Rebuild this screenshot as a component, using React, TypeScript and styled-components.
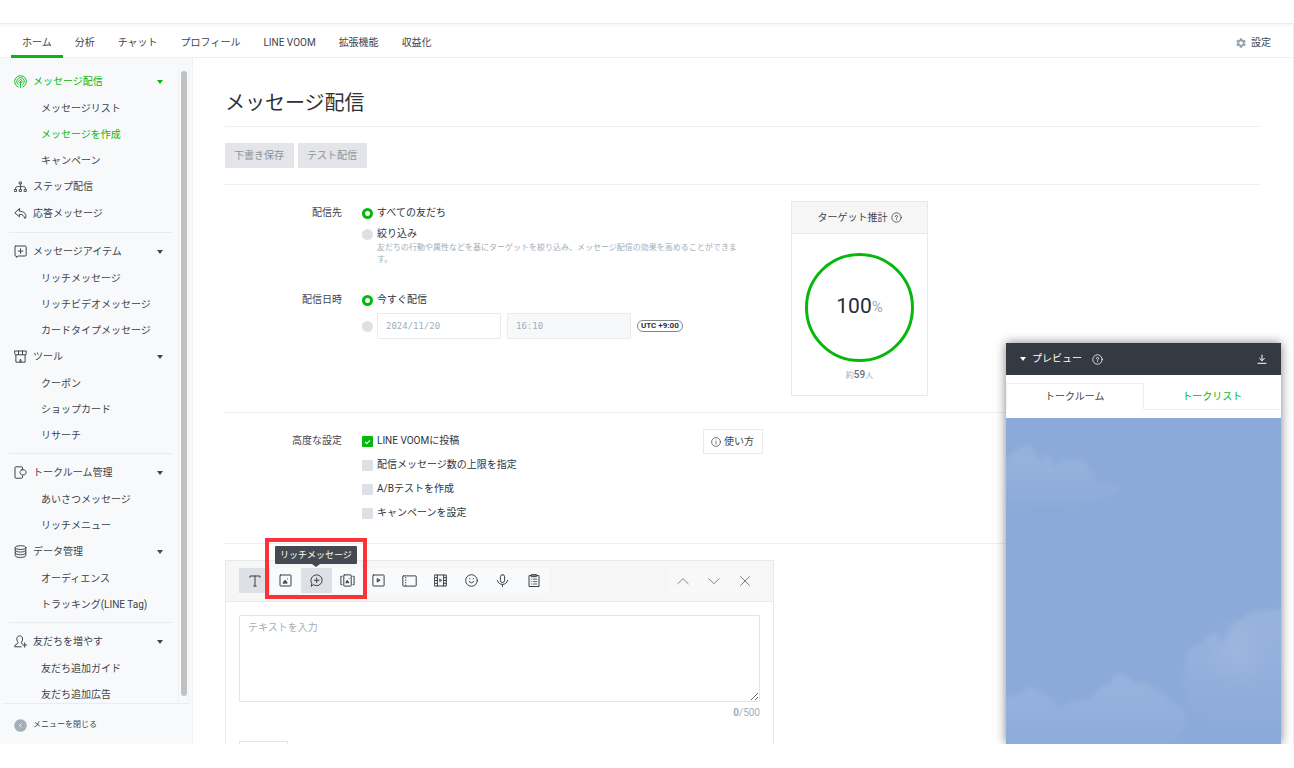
import React from "react";
import styled, { createGlobalStyle, css } from "styled-components";
import { MdSettings } from "react-icons/md";

const GREEN = "#06b80c";
const INK = "#3f444d";
const MUTED = "#a4adb8";
const LINE = "#eeeff1";

const GlobalStyle = createGlobalStyle`
  *, *::before, *::after { box-sizing: border-box; }
  body {
    margin: 0;
    background: #fff;
    color: ${INK};
    font: 10px/16px Roboto, "Noto Sans CJK JP", sans-serif;
  }
  button, input, textarea { font: inherit; color: inherit; margin: 0; }
  button { border: 0; padding: 0; background: none; cursor: pointer; }
  a { color: inherit; text-decoration: none; }
  ul { list-style: none; margin: 0; padding: 0; }
`;

/* ---------- frame ---------- */

const Page = styled.div`
  height: 100vh;
  padding: 23px 0 24px;
`;

const Frame = styled.div`
  position: relative;
  display: flex;
  flex-direction: column;
  height: 100%;
  overflow: hidden;
  border-top: 1px solid #ededee;
  border-right: 1px solid ${LINE};
`;

const TopBar = styled.header`
  flex: none;
  display: flex;
  justify-content: space-between;
  height: 34px;
  padding: 0 22px 0 11px;
  background: #fff;
  box-shadow: inset 0 -1px ${LINE}, inset 0 3px 2px -1px #f7f7f8;
`;

const Tabs = styled.nav`
  display: flex;
  gap: 1px;
`;

const Tab = styled.a<{ $active?: boolean }>`
  display: flex;
  align-items: center;
  padding: 6px 11px 0;
  border-bottom: 3px solid ${(p) => (p.$active ? GREEN : "transparent")};
`;

const Settings = styled.a`
  display: flex;
  align-items: center;
  gap: 4px;
  padding-top: 3px;
  svg { color: #97a2ae; }
`;

const Body = styled.div`
  flex: 1;
  min-height: 0;
  display: flex;
`;

/* ---------- side menu ---------- */

const Sidebar = styled.aside`
  flex: none;
  width: 193px;
  display: flex;
  flex-direction: column;
  background: #f8f9fb;
  border-right: 1px solid #f0f1f3;
`;

const MenuArea = styled.div`
  flex: 1;
  min-height: 0;
  display: grid;
  grid-template-columns: minmax(0, 1fr) 11px;
  margin: 0 3px;
  border-bottom: 1px solid #ebecee;
`;

const Menu = styled.nav`
  overflow: hidden;
  padding: 10px 6px 0;
`;

const ScrollTrack = styled.div`
  margin-top: 11px;
  padding: 2px 1px 7px 2px;
  border-left: 1px solid #f0f1f2;
  border-right: 1px solid #f0f1f2;
`;

const ScrollThumb = styled.div`
  height: 100%;
  border-radius: 3px;
  background: #c1c1c1;
`;

const Group = styled.ul`
  & + & {
    margin-top: 5px;
    padding-top: 5px;
    border-top: 1px solid #e9ebed;
  }
`;

const Heading = styled.button<{ $active?: boolean }>`
  display: flex;
  align-items: center;
  width: 100%;
  height: 27px;
  padding: 0 9px 0 5px;
  gap: 6px;
  text-align: left;
  color: ${(p) => (p.$active ? GREEN : INK)};
  span { flex: 1; }
`;

const SubLink = styled.a<{ $active?: boolean }>`
  display: block;
  height: 26px;
  padding-left: 32px;
  line-height: 27px;
  color: ${(p) => (p.$active ? GREEN : INK)};
`;

const Caret = styled.i`
  border: solid transparent;
  border-width: 4px 3px 0;
  border-top-color: currentColor;
`;

const CloseMenu = styled.button`
  flex: none;
  display: flex;
  align-items: center;
  gap: 6px;
  height: 40px;
  padding: 2px 0 0 14px;
  font-size: 8px;
`;

/* ---------- main column ---------- */

const Main = styled.main`
  flex: 1;
  min-width: 0;
  overflow: hidden;
  padding: 0 33px 0 32px;
`;

const Title = styled.h1`
  margin: 0;
  padding: 30px 0 8px;
  font-size: 20px;
  line-height: 30px;
  font-weight: 400;
  color: #2d3139;
  border-bottom: 1px solid ${LINE};
`;

const Actions = styled.div`
  display: flex;
  gap: 4px;
  padding: 16px 0;
  border-bottom: 1px solid ${LINE};
`;

const GrayButton = styled.button`
  height: 25px;
  padding: 0 10px 0 9px;
  background: #e3e5e8;
  color: #8e939a;
`;

const Section = styled.section<{ $bottom: number }>`
  display: flex;
  align-items: flex-start;
  padding: 16px 0 ${(p) => p.$bottom}px;
  border-bottom: 1px solid ${LINE};
`;

const Form = styled.div<{ $width: number }>`
  flex: 0 1 ${(p) => p.$width}px;
  display: flex;
  flex-direction: column;
  gap: 26px;
  padding-top: 4px;
`;

const Field = styled.fieldset<{ $gap: number }>`
  display: grid;
  grid-template-columns: 117px minmax(0, 1fr);
  column-gap: 20px;
  margin: 0;
  padding: 0;
  border: 0;
  & > div {
    display: flex;
    flex-direction: column;
    gap: ${(p) => p.$gap}px;
  }
`;

const FieldName = styled.span`
  text-align: right;
`;

const Choice = styled.label`
  display: grid;
  grid-template-columns: 11px minmax(0, 1fr);
  align-items: center;
  column-gap: 4px;
  color: #30353d;
`;

const Hint = styled.small`
  grid-column: 2;
  max-width: 372px;
  font-size: 8px;
  line-height: 12px;
  color: ${MUTED};
`;

const Radio = styled.input.attrs({ type: "radio" })`
  appearance: none;
  width: 11px;
  height: 11px;
  border-radius: 50%;
  background: #dde1e6;
  &:checked {
    background: radial-gradient(circle, #fff 2px, ${GREEN} 3px);
  }
`;

const Check = styled.input.attrs({ type: "checkbox" })`
  appearance: none;
  display: grid;
  place-items: center;
  width: 11px;
  height: 11px;
  border-radius: 1px;
  background: #dde1e6;
  &:checked { background: ${GREEN}; }
  &:checked::after {
    content: "";
    width: 5px;
    height: 3px;
    border: solid #fff;
    border-width: 0 0 1px 1px;
    transform: rotate(-45deg);
  }
`;

const Schedule = styled.div`
  display: flex;
  align-items: center;
  gap: 6px;
  ${Radio} { margin-right: -2px; }
`;

const DateBox = styled.input`
  width: 124px;
  height: 26px;
  padding: 0 8px;
  border: 1px solid #e9ebee;
  border-radius: 1px;
  background: #fff;
  color: ${MUTED};
  font: 9px "DejaVu Sans Mono", monospace;
  &:disabled { background: #f7f8fa; }
`;

const Zone = styled.span`
  padding: 0 3px;
  border: 1px solid #80858c;
  border-radius: 6px;
  font-size: 8px;
  line-height: 10px;
  font-weight: 700;
  white-space: nowrap;
  color: #2d3139;
`;

const Target = styled.div`
  flex: none;
  width: 137px;
  border: 1px solid #e8e9eb;
  text-align: center;
`;

const TargetHead = styled.div`
  display: flex;
  align-items: center;
  justify-content: center;
  gap: 3px;
  height: 32px;
  background: #f6f6f7;
  border-bottom: 1px solid #e8e9eb;
`;

const Ring = styled.div`
  display: flex;
  align-items: center;
  justify-content: center;
  width: 109px;
  height: 109px;
  margin: 19px auto 5px;
  padding-bottom: 3px;
  border: 3px solid ${GREEN};
  border-radius: 50%;
  font-size: 21px;
  color: #262b33;
  small { font-size: 15px; padding-top: 2px; color: ${MUTED}; }
`;

const Count = styled.p`
  margin: 0 0 11px;
  font-size: 8px;
  color: ${MUTED};
  b { font-size: 10px; font-weight: 500; color: #666f85; }
`;

const HelpButton = styled.button`
  flex: none;
  display: flex;
  align-items: center;
  gap: 3px;
  height: 25px;
  padding: 0 8px 0 7px;
  border: 1px solid #e8eaec;
`;

/* ---------- message composer ---------- */

const Composer = styled.section`
  max-width: 549px;
  margin-top: 16px;
  border: 1px solid #e8e9eb;
`;

const ComposerHead = styled.div`
  display: flex;
  justify-content: space-between;
  padding: 7px 13px 8px;
  background: #f6f6f6;
  border-bottom: 1px solid #ebecee;
`;

const Tools = styled.div`
  position: relative;
  display: flex;
  background: #f9fafb;
`;

const Tool = styled.button<{ $on?: boolean }>`
  display: grid;
  place-items: center;
  width: 31px;
  height: 25px;
  color: #3a3f47;
  ${(p) => p.$on && css`background: #dde1e5;`}
`;

const Movers = styled.div`
  display: flex;
  background: #f8f8f8;
  ${Tool} { color: #7c8086; }
`;

const Highlight = styled.div`
  position: absolute;
  left: 26px;
  top: -30px;
  width: 102px;
  height: 61px;
  border: 4px solid #fb3337;
  pointer-events: none;
`;

const Tooltip = styled.div`
  position: absolute;
  left: 36px;
  top: -22px;
  padding: 0 5px;
  border-radius: 1px;
  background: #454a52;
  color: #fff;
  font-size: 9px;
  line-height: 18px;
  white-space: nowrap;
  &::after {
    content: "";
    position: absolute;
    left: 50%;
    top: 100%;
    margin-left: -4px;
    border: 4px solid transparent;
    border-top: 3px solid #454a52;
    border-bottom: 0;
  }
`;

const ComposerBody = styled.div`
  padding: 13px;
`;

const TextInput = styled.textarea`
  display: block;
  width: 100%;
  height: 87px;
  padding: 4px 8px;
  border: 1px solid #e3e5e8;
  border-radius: 1px;
  resize: vertical;
  &::placeholder { color: ${MUTED}; }
`;

const Counter = styled.p`
  margin: 3px 0 20px;
  text-align: right;
  color: ${MUTED};
  b { font-weight: 700; }
`;

const EmojiButton = styled.button`
  width: 49px;
  height: 25px;
  border: 1px solid #e3e5e8;
`;

/* ---------- floating preview ---------- */

const Preview = styled.aside`
  position: absolute;
  right: 12px;
  bottom: 0;
  display: flex;
  flex-direction: column;
  width: 275px;
  height: 401px;
  background: #fff;
  box-shadow: 0 0 10px rgba(0, 0, 0, 0.5);
`;

const PreviewHead = styled.div`
  display: flex;
  align-items: center;
  height: 32px;
  padding: 0 14px;
  background: #353a42;
  color: #fff;
  & > svg { margin-left: 10px; }
  button { display: grid; margin-left: auto; }
`;

const PreviewToggle = styled.button`
  && {
    display: flex;
    align-items: center;
    gap: 6px;
    margin: 0;
  }
`;

const PreviewTabs = styled.div`
  display: grid;
  grid-template-columns: 1fr 1fr;
  padding: 8px 0;
`;

const PreviewTab = styled.button<{ $on?: boolean }>`
  height: 27px;
  border: 1px solid ${LINE};
  ${(p) =>
    p.$on
      ? css`border-bottom-color: transparent;`
      : css`
          border-color: transparent transparent ${LINE};
          color: ${GREEN};
        `}
`;

const Sky = styled.svg`
  flex: 1;
  min-height: 0;
  width: 100%;
  background: #8caad9;
`;

/* ---------- icons ---------- */

const Svg = ({ w = 13, h = w, sw = 1, children }: { w?: number; h?: number; sw?: number; children: React.ReactNode }) => (
  <svg width={w} height={h} viewBox={`0 0 ${w} ${h}`} fill="none" stroke="currentColor" strokeWidth={sw} strokeLinecap="round" strokeLinejoin="round" aria-hidden="true">
    {children}
  </svg>
);

const icons = {
  broadcast: (
    <Svg sw={0.9}>
      <path d="M4.2 12A5.9 5.9 0 1 1 8.8 12" />
      <path d="M4.4 9.6A3.8 3.8 0 1 1 8.6 9.6" />
      <path d="M5.400 7.600a1.700 1.700 0 1 1 2.200 0" />
      <path d="M6.5 6.5v6" />
    </Svg>
  ),
  step: (
    <Svg sw={0.9}>
      <rect x="5.6" y="2" width="1.8" height="2" />
      <path d="M6.5 4v5.400M1.6 9.4V8.2q0-1.6 1.6-1.6h6.6q1.6 0 1.6 1.6v1.2" />
      <rect x="0.7" y="9.5" width="1.8" height="2" />
      <rect x="5.6" y="9.5" width="1.8" height="2" />
      <rect x="10.5" y="9.5" width="1.8" height="2" />
    </Svg>
  ),
  reply: (
    <Svg>
      <path d="M5.4 1.7.8 5.8l4.6 4V7.4c3.2-.2 4.6 1.3 5.2 3.9q.3.4.8-.1C13.200 7.500 10.500 4.300 5.400 4.100z" />
    </Svg>
  ),
  item: (
    <Svg>
      <path d="M1.700 1h9.600q.9 0 .9.9v8.200q0 .9-.9.9H4.200L2.400 12.400 2.200 11q-1.200 0-1.200-.9V1.900Q1 1 1.700 1z" />
      <path d="M6.600 3.800v4.600M4.300 6.100h4.600" />
    </Svg>
  ),
  shop: (
    <Svg>
      <path d="M.8 1h11.400v3q0 .8-.9.8H1.700q-.9 0-.9-.8zM4.500 1v3.600M8.500 1v3.600M1.900 5v7.200h9.200V5M6 12V9.600h1V12" />
    </Svg>
  ),
  talk: (
    <Svg>
      <path d="M8.600 3V1.800q0-1-1-1H2q-1 0-1 1v9.400q0 1 1 1h5.600q1 0 1-1V10" />
      <path d="M7.800 3.800h2.500q.5 0 .8.500l1 1.500q.3.500 0 1l-1 1.600q-.3.500-.8.500H7.800q-.5 0-.8-.5L6 6.800q-.3-.5 0-1l1-1.500q.300-.5.800-.5z" />
    </Svg>
  ),
  data: (
    <Svg>
      <ellipse cx="6.500" cy="2.600" rx="5.300" ry="1.900" />
      <path d="M1.200 2.600v7.900c0 2.600 10.600 2.600 10.600 0V2.600M1.200 5.200c0 2.600 10.600 2.600 10.600 0M1.200 7.900c0 2.600 10.600 2.600 10.600 0" />
    </Svg>
  ),
  friend: (
    <Svg>
      <path d="M7.200 11.800H.6q0-2.400 3.200-3.300.8-.4.100-1.300C2 4.500 2.700.9 5.700.9s3.800 3.600 1.700 6.300q-.6.900.2 1.300l.8.3M10.700 7.800v4.400M8.700 10h4" />
    </Svg>
  ),
  back: (
    <svg width="13" height="13" viewBox="0 0 13 13" aria-hidden="true">
      <circle cx="6.500" cy="6.500" r="6.300" fill="#a5afbc" />
      <path d="M7.300 4.700 5.600 6.500l1.700 1.800" fill="none" stroke="#fff" strokeWidth="0.9" />
    </svg>
  ),
  question: (
    <Svg w={11} sw={0.8}>
      <circle cx="5.500" cy="5.500" r="4.700" />
      <path d="M4.300 4.600q0-1.200 1.200-1.200t1.200 1.100q0 .7-1.200 1.300v.5M5.500 7.600v.1" />
    </Svg>
  ),
  info: (
    <Svg w={10} sw={0.7}>
      <circle cx="5" cy="5" r="4.400" />
      <path d="M5 4.500v2.700M5 2.900V3" />
    </Svg>
  ),
  text: (
    <Svg w={12}>
      <path d="M1 2.300V1h10v1.300M6 1v10M4.800 11h2.400" />
    </Svg>
  ),
  image: (
    <Svg w={13}>
      <rect x="1" y="1" width="11" height="11" rx="0.500" />
      <path d="m4.200 8.800 1.600-2.400 1.300.9.900 1.500z" fill="currentColor" />
      <path d="M8.400 4.800v.1" />
    </Svg>
  ),
  rich: (
    <Svg w={13}>
      <path d="M1.300 12l.5-2.300C-.3 6 1.800.9 6.700.9c3.100 0 5.400 2.400 5.400 5.300 0 3.200-2.400 5.400-5.400 5.400-1.200 0-2.200-.3-3-.8z" />
      <path d="M6.700 4v4.600M4.400 6.300H9" />
    </Svg>
  ),
  card: (
    <Svg w={15} h={13}>
      <rect x="3.800" y="0.900" width="7.400" height="11.200" rx="0.500" />
      <path d="M2 2.300H.9v8.400H2M13 2.300h1.100v8.400H13" />
      <path d="m6 8.400 1-2 .9.800.7 1.200z" fill="currentColor" />
      <path d="M9 4.600v.1" />
    </Svg>
  ),
  video: (
    <Svg w={13}>
      <rect x="0.900" y="1" width="11.200" height="11" rx="0.500" />
      <path d="M5.200 5v3l2.600-1.500z" fill="#8b8f95" />
    </Svg>
  ),
  coupon: (
    <Svg w={15} h={12}>
      <rect x="0.800" y="0.900" width="13.400" height="10.200" rx="0.600" />
      <path d="M3.700 2.500v8" strokeDasharray="0.5 2" />
    </Svg>
  ),
  richVideo: (
    <Svg w={13}>
      <path d="M.7 1h11.600v11H.7zM3.400 1v11M9.600 1v11M.7 3.700h2.700M.7 6.500h2.700M.7 9.300h2.700M9.600 3.700h2.700M9.600 6.500h2.700M9.600 9.300h2.700" />
      <path d="M5.700 5.200v2.600L7.700 6.500z" strokeWidth="0.7" fill="#8b8f95" />
    </Svg>
  ),
  smile: (
    <Svg w={13}>
      <circle cx="6.500" cy="6.500" r="5.800" />
      <path d="M4.700 4.500v.3M8.300 4.500v.3M4.200 7.700q2.300 2.600 4.600 0" />
    </Svg>
  ),
  mic: (
    <Svg w={13}>
      <rect x="4.400" y="0.700" width="4.200" height="7.800" rx="2.100" />
      <path d="M1.400 6.500c.8 5.300 9.400 5.300 10.200 0M6.500 10.500v2" />
    </Svg>
  ),
  survey: (
    <Svg w={12} h={13}>
      <path d="M3.600 1.600H1v10.900h10V1.600H8.400" />
      <rect x="3.600" y="0.700" width="4.800" height="2" fill="#8b8f95" />
      <path d="M3.200 5.200h.2M5.200 5.200h3.600M3.200 7.600h.2M5.200 7.600h3.600M3.200 10h.2M5.200 10h3.600" strokeWidth="0.8" />
    </Svg>
  ),
  up: (
    <Svg w={12}>
      <path d="m.8 8.700 5.200-5 5.200 5" />
    </Svg>
  ),
  down: (
    <Svg w={12}>
      <path d="m.8 3.700 5.200 5 5.200-5" />
    </Svg>
  ),
  close: (
    <Svg w={10}>
      <path d="m.6.600 8.800 8.800M9.400.600.600 9.400" />
    </Svg>
  ),
  download: (
    <Svg w={10}>
      <path d="M5 1v5.600M2.600 4.300 5 6.700l2.400-2.400M1 9.300h8" />
    </Svg>
  ),
};

/* ---------- content ---------- */

type Entry = { label: string; icon: React.ReactNode; active?: boolean; children?: string[] };

const groups: Entry[][] = [
  [
    { label: "メッセージ配信", icon: icons.broadcast, active: true, children: ["メッセージリスト", "メッセージを作成", "キャンペーン"] },
    { label: "ステップ配信", icon: icons.step },
    { label: "応答メッセージ", icon: icons.reply },
  ],
  [
    { label: "メッセージアイテム", icon: icons.item, children: ["リッチメッセージ", "リッチビデオメッセージ", "カードタイプメッセージ"] },
    { label: "ツール", icon: icons.shop, children: ["クーポン", "ショップカード", "リサーチ"] },
  ],
  [
    { label: "トークルーム管理", icon: icons.talk, children: ["あいさつメッセージ", "リッチメニュー"] },
    { label: "データ管理", icon: icons.data, children: ["オーディエンス", "トラッキング(LINE Tag)"] },
  ],
  [{ label: "友だちを増やす", icon: icons.friend, children: ["友だち追加ガイド", "友だち追加広告"] }],
];

const tabs = ["ホーム", "分析", "チャット", "プロフィール", "LINE VOOM", "拡張機能", "収益化"];

const tools: [string, React.ReactNode][] = [
  ["テキスト", icons.text],
  ["画像", icons.image],
  ["リッチメッセージ", icons.rich],
  ["カードタイプメッセージ", icons.card],
  ["動画", icons.video],
  ["クーポン", icons.coupon],
  ["リッチビデオメッセージ", icons.richVideo],
  ["スタンプ", icons.smile],
  ["ボイスメッセージ", icons.mic],
  ["リサーチ", icons.survey],
];

const options = ["LINE VOOMに投稿", "配信メッセージ数の上限を指定", "A/Bテストを作成", "キャンペーンを設定"];

const Clouds = () => (
  <Sky viewBox="0 0 275 326" preserveAspectRatio="xMidYMin slice" aria-hidden="true">
    <defs>
      <filter id="soft" x="-10%" y="-10%" width="120%" height="120%">
        <feGaussianBlur stdDeviation="2" />
      </filter>
      <linearGradient id="fade" x1="0" y1="0" x2="0" y2="1">
        <stop offset="0" stopColor="#fff" stopOpacity="0.100" />
        <stop offset="0.500" stopColor="#fff" stopOpacity="0.060" />
        <stop offset="1" stopColor="#fff" stopOpacity="0" />
      </linearGradient>
      <radialGradient id="glow">
        <stop offset="0" stopColor="#fff" stopOpacity="0.080" />
        <stop offset="1" stopColor="#fff" stopOpacity="0" />
      </radialGradient>
    </defs>
    <g filter="url(#soft)" fill="url(#fade)">
      <path d="M-8 44q13-4 15-10 8-5 16-7 3 4 5 10 4 2 6 5 5-6 11-4 1 7 3 11 8-8 18-8 12 0 17 8 5 8 8 16 14 0 26 4-8 8-20 12-20 8-44 12-28 0-61-4z" />
      <path d="M178 270q0-20 3-34 3-11 15-10 3-11 11-11 6 1 7 9 8-3 10-14 6-8 14-10 4-8 15-7 12-2 32-2v120q-40 10-70 2-30-8-37-43z" />
      <path d="M-8 283q18-8 28-10 3-8 7-3 5 4 12 7 9 2 15 14 12-12 32-10 4-12 18-16 4-9 11-10 8 4 12 10 10-4 18 4 14 4 20 16 14 2 16 20l-16 26q-80 8-173 3z" />
    </g>
    <ellipse cx="232" cy="234" rx="34" ry="40" fill="url(#glow)" />
  </Sky>
);

export default function App() {
  return (
    <Page>
      <GlobalStyle />
      <Frame>
        <TopBar>
          <Tabs>
            {tabs.map((t, i) => (
              <Tab href="#" key={t} $active={i === 0}>{t}</Tab>
            ))}
          </Tabs>
          <Settings href="#"><MdSettings size={12} />設定</Settings>
        </TopBar>

        <Body>
          <Sidebar>
            <MenuArea>
              <Menu>
                {groups.map((g, i) => (
                  <Group key={i}>
                    {g.map((e) => (
                      <li key={e.label}>
                        <Heading $active={e.active}>
                          {e.icon}
                          <span>{e.label}</span>
                          {e.children && <Caret />}
                        </Heading>
                        {e.children?.map((c) => (
                          <SubLink href="#" key={c} $active={c === "メッセージを作成"}>{c}</SubLink>
                        ))}
                      </li>
                    ))}
                  </Group>
                ))}
              </Menu>
              <ScrollTrack><ScrollThumb /></ScrollTrack>
            </MenuArea>
            <CloseMenu>{icons.back}メニューを閉じる</CloseMenu>
          </Sidebar>

          <Main>
            <Title>メッセージ配信</Title>
            <Actions>
              <GrayButton>下書き保存</GrayButton>
              <GrayButton>テスト配信</GrayButton>
            </Actions>

            <Section $bottom={16}>
              <Form $width={566}>
                <Field $gap={5} aria-label="配信先">
                  <FieldName>配信先</FieldName>
                  <div>
                    <Choice><Radio name="to" defaultChecked />すべての友だち</Choice>
                    <Choice>
                      <Radio name="to" />絞り込み
                      <Hint>友だちの行動や属性などを基にターゲットを絞り込み、メッセージ配信の効果を高めることができます。</Hint>
                    </Choice>
                  </div>
                </Field>
                <Field $gap={5} aria-label="配信日時">
                  <FieldName>配信日時</FieldName>
                  <div>
                    <Choice><Radio name="when" defaultChecked />今すぐ配信</Choice>
                    <Schedule>
                      <Radio name="when" aria-label="日時を指定" />
                      <DateBox aria-label="日付" defaultValue="2024/11/20" />
                      <DateBox aria-label="時刻" defaultValue="16:10" disabled />
                      <Zone>UTC +9:00</Zone>
                    </Schedule>
                  </div>
                </Field>
              </Form>
              <Target>
                <TargetHead>ターゲット推計{icons.question}</TargetHead>
                <Ring>100<small>%</small></Ring>
                <Count>約<b>59</b>人</Count>
              </Target>
            </Section>

            <Section $bottom={22}>
              <Form $width={478}>
                <Field $gap={8} aria-label="高度な設定">
                  <FieldName>高度な設定</FieldName>
                  <div>
                    {options.map((o, i) => (
                      <Choice key={o}><Check defaultChecked={i === 0} />{o}</Choice>
                    ))}
                  </div>
                </Field>
              </Form>
              <HelpButton>{icons.info}使い方</HelpButton>
            </Section>

            <Composer>
              <ComposerHead>
                <Tools>
                  {tools.map(([name, icon], i) => (
                    <Tool key={name} aria-label={name} $on={i === 0 || i === 2}>{icon}</Tool>
                  ))}
                  <Highlight />
                  <Tooltip role="tooltip">リッチメッセージ</Tooltip>
                </Tools>
                <Movers>
                  <Tool aria-label="上へ移動">{icons.up}</Tool>
                  <Tool aria-label="下へ移動">{icons.down}</Tool>
                  <Tool aria-label="削除">{icons.close}</Tool>
                </Movers>
              </ComposerHead>
              <ComposerBody>
                <TextInput aria-label="メッセージ本文" placeholder="テキストを入力" />
                <Counter><b>0</b>/500</Counter>
                <EmojiButton aria-label="絵文字" />
              </ComposerBody>
            </Composer>
          </Main>
        </Body>

        <Preview>
          <PreviewHead>
            <PreviewToggle><Caret />プレビュー</PreviewToggle>
            {icons.question}
            <button aria-label="ダウンロード">{icons.download}</button>
          </PreviewHead>
          <PreviewTabs>
            <PreviewTab $on>トークルーム</PreviewTab>
            <PreviewTab>トークリスト</PreviewTab>
          </PreviewTabs>
          <Clouds />
        </Preview>
      </Frame>
    </Page>
  );
}
